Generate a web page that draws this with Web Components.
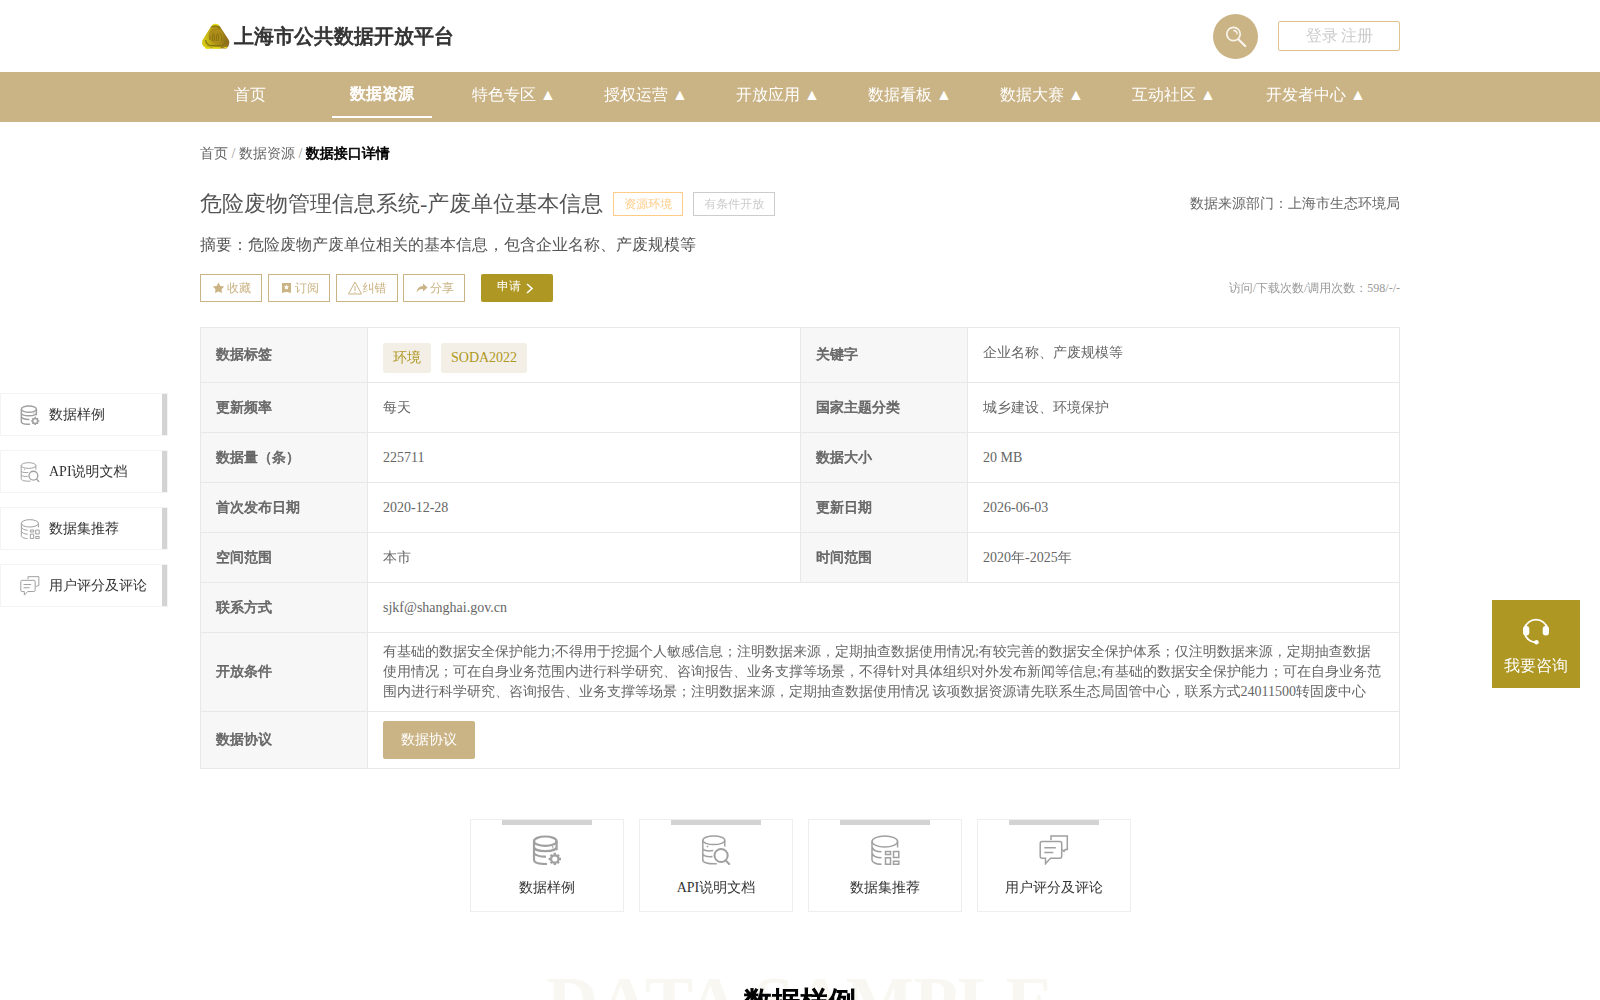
<!DOCTYPE html>
<html lang="zh-CN">
<head>
<meta charset="utf-8">
<title>上海市公共数据开放平台</title>
<style>
    html, body {
        margin: 0;
        height: 1000px;
        overflow: hidden;
    }

    body {
        background: #fff;
        color: #666;
        font-family: "Liberation Serif", "WenQuanYi Zen Hei", "Droid Sans Fallback", "Noto Sans CJK SC", serif;
        font-size: 14px;
        line-height: 20px;
        /* the CJK face has no bold cut, so bold text is thickened with a stroke */
        --bold-stroke: .045em;
    }
</style>
</head>
<body>
<open-data-page></open-data-page>

<script>
const define = (name, html) => {
    customElements.define(name, class extends HTMLElement {
        constructor() {
            super();
            this.attachShadow({ mode: 'open' }).innerHTML = html;
        }
    });
};

/**
 * Line icons, picked by the "name" attribute and sized by the "size" attribute
 */
const ICONS = {
    sample: `
        <g stroke-width="2.200"><ellipse cx="12.500" cy="6.200" rx="11.300" ry="4.700"/>
        <path d="M1.200 6.200V25c0 2.600 5 4 13 4M23.800 6.200v9M1.200 12c0 5.500 22.600 5.500 22.600 0M1.200 18.500q4 3.500 12 3.200"/>
        <circle cx="22" cy="24" r="3.700"/></g>
        <path stroke-width="2.400" d="M22 17.800v2M22 28v2M15.800 24h2M26.200 24h2M17.800 19.800l1.400 1.400M24.800 26.800l1.400 1.400M17.800 28.200l1.400-1.400M24.800 21.200l1.400-1.400"/>
        <path stroke-width="1" d="M20 11v2.500"/>`,
    api: `
        <g stroke-width="1.5"><ellipse cx="12" cy="5.300" rx="11" ry="4.300"/>
        <path d="M1 5.500V25c0 2.500 5 4.200 14 3.700M23 5.500v6M1 14c2 2 6.500 2.300 10.500 1.600M1 19.500c2 2.200 5 2.500 9.700 2"/>
        <path d="M5 11.500h1.500"/></g>
        <circle cx="19.300" cy="20.500" r="6.600" stroke-width="2"/><path stroke-width="2" d="M24 25.500l4 4.300"/>`,
    recommend: `
        <g stroke-width="1.5"><ellipse cx="14" cy="6.500" rx="12.800" ry="5.500"/>
        <path d="M1.200 6.500V25c0 2.300 4 4.300 9.500 4.300M26.800 6.500v6M1.200 12c1 3 4.500 4.800 9.500 4.800M1.200 18c1 3 4.500 4.800 9.500 4.800"/>
        <path d="M14.700 16.500h5v3h-5zM22.700 16.500h5.300v6h-5.300zM14.700 22.700h5v6.500h-5zM22.700 26.200h5.300v3h-5.300z"/></g>`,
    comment: `
        <g stroke-width="1.500" transform="translate(-.800)"><path d="M12 5V1h16.300v13.500h-2l-1.300 1.800-2-1.800"/>
        <path d="M3.200 6.500h17.500q2 0 2 2v12.800q0 2-2 2h-9.200L6.500 28.700v-5.400H3.200q-2 0-2-2V8.500q0-2 2-2z"/>
        <path d="M5.300 12.800h11.500M5.300 17.600h9"/></g>`
};

class DataIcon extends HTMLElement {
    constructor() {
        super();
        this.attachShadow({ mode: 'open' });
    }

    connectedCallback() {
        const size = this.getAttribute('size');
        this.shadowRoot.innerHTML = `
            <style>
                :host { display: block; width: ${size}px; height: ${size}px; }
                svg { display: block; }
            </style>
            <svg width="${size}" height="${size}" viewBox="-0.800 0 30 30" fill="none" stroke="#a0a0a0">${ICONS[this.getAttribute('name')]}</svg>
        `;
    }
}
customElements.define('data-icon', DataIcon);

define('site-header', `
    <style>
        :host { display: flex; align-items: center; width: 1200px; height: 72px; margin: 0 auto; }
        .logo { margin: 0 3px 0 1px; }
        h1 {
            flex: 1; margin: 0; font-size: 20px; line-height: 28px; color: #333;
            -webkit-text-stroke: var(--bold-stroke);
        }
        .search {
            width: 45px; height: 45px; margin: 1px 20px 0 0; border-radius: 50%;
            background: #cab384; display: grid; place-items: center;
        }
        .login {
            box-sizing: border-box; width: 122px; height: 30px; padding-left: 1px;
            border: 1px solid #e0c38c; border-radius: 2px;
            font-size: 16px; line-height: 27px; word-spacing: -1px; text-align: center; color: #ccc;
        }
    </style>
    <svg class="logo" width="30" height="27" viewBox="0 0 29 27" preserveAspectRatio="none">
        <defs>
            <linearGradient id="gold" x2="1"><stop stop-color="#d8ce16"/><stop offset=".45" stop-color="#b29a13"/><stop offset="1" stop-color="#8b671f"/></linearGradient>
        </defs>
        <path d="M10 3Q14-1 18 3l3.500 5.500 5 8Q29 21 24.500 25.500H5Q-.5 22 1.500 17z" fill="url(#gold)"/>
        <path d="M11 2.500q3-2 6 0M11 25h8M3.500 22.500L5 25h4M22 25l3-1" stroke="#e6e010" stroke-width="1.300" fill="none"/>
        <path d="M10 4.500q4.500-3 8.500 1M4.500 17q.5 4 4 5.500h12q3.500-2 4-5.500" stroke="#857512" stroke-width="1.200" fill="none"/>
        <ellipse cx="14.500" cy="12.500" rx="7" ry="7.500" fill="#ad8c19"/>
        <path d="M8.500 17v-4M11 18v-5l1-2 1 2v5M15 18v-5l1-2 1 2v5M20 18v-5l-2-3" stroke="#8a7410" fill="none"/>
    </svg>
    <h1>上海市公共数据开放平台</h1>
    <div class="search">
        <svg width="22" height="22" viewBox="0 0 22 22" fill="none" stroke="#f8f4ed" stroke-linecap="round">
            <circle cx="8.500" cy="8" r="6.700" stroke-width="1.700"/>
            <path d="M13.500 13.500l6.700 6.500" stroke-width="2.300"/>
            <path d="M8.800 4.500q3.200.3 3.400 3.200" stroke-width="1.400"/>
        </svg>
    </div>
    <div class="login">登录 注册</div>
`);

define('site-nav', `
    <style>
        :host { display: block; background: #cab384; }
        nav { display: flex; gap: 32px; width: 1200px; height: 50px; margin: 0 auto; }
        a {
            box-sizing: border-box; flex: none; width: 100px; height: 46px; line-height: 46px;
            font-size: 16px; text-align: center; white-space: nowrap; color: #fff;
        }
        a.active {
            border-bottom: 2px solid #fff; font-weight: bold; line-height: 44px;
            -webkit-text-stroke: var(--bold-stroke);
        }
        a:last-child { width: 120px; }
    </style>
    <nav>
        <a>首页</a><a class="active">数据资源</a><a>特色专区 ▲</a><a>授权运营 ▲</a><a>开放应用 ▲</a>
        <a>数据看板 ▲</a><a>数据大赛 ▲</a><a>互动社区 ▲</a><a>开发者中心 ▲</a>
    </nav>
`);

define('crumb-trail', `
    <style>
        :host { display: block; padding-top: 22px; color: #999; }
        a { color: #666; }
        b { color: #000; -webkit-text-stroke: var(--bold-stroke); }
    </style>
    <a>首页</a> / <a>数据资源</a> / <b>数据接口详情</b>
`);

define('tool-button', `
    <style>
        :host {
            box-sizing: border-box; display: flex; align-items: center; justify-content: center;
            width: 62px; height: 28px; padding-left: 1px; border: 1px solid #cab384;
            color: #cab384; font-size: 12px; line-height: 26px;
        }
    </style>
    <slot></slot>
`);

define('resource-head', `
    <style>
        :host { display: block; }
        .row { display: flex; align-items: center; }
        .title { height: 24px; margin-top: 28px; gap: 10px; }
        h2 { margin: 0; font-size: 22px; line-height: 30px; font-weight: normal; color: #555; }
        .tag { box-sizing: border-box; height: 24px; padding: 0 10px; border: 1px solid #ccc; font-size: 12px; line-height: 22px; color: #ccc; }
        .tag.theme { border-color: #fc8; color: #fc8; }
        .right { margin-left: auto; }
        p { margin: 17px 0; font-size: 16px; line-height: 24px; color: #555; }
        .tools { gap: 6px; }
        .tools svg { flex: none; overflow: visible; }
        .apply {
            box-sizing: border-box; display: flex; gap: 5px; width: 72px; height: 28px; margin-left: 10px; padding-left: 16px;
            border-radius: 2px; background: #ae9722; color: #fff; font-size: 12px; line-height: 24px;
        }
        .apply svg { margin-top: 9px; }
        .count { font-size: 12px; color: #999; }
    </style>
    <div class="row title">
        <h2>危险废物管理信息系统-产废单位基本信息</h2>
        <span class="tag theme">资源环境</span>
        <span class="tag">有条件开放</span>
        <span class="right">数据来源部门：上海市生态环境局</span>
    </div>
    <p>摘要：危险废物产废单位相关的基本信息，包含企业名称、产废规模等</p>
    <div class="row tools">
        <tool-button>
            <svg width="15" height="12" viewBox="0 0 15 12" fill="#cab384"><path d="M6.500 0.500l1.800 3.400 3.900.7-2.700 2.700.5 3.800-3.500-1.600L3 11.100l.5-3.800L.8 4.600l3.900-.7z"/></svg>收藏
        </tool-button>
        <tool-button>
            <svg width="15" height="12" viewBox="-1 0 15 12" fill="#cab384"><path fill-rule="evenodd" d="M1 1h9v10L5.500 9.700 1 11zM5.500 2.500l-.8 1.700-1.800.2 1.300 1.300-.3 1.800 1.600-.8 1.600.8-.3-1.800 1.300-1.300-1.800-.2z"/></svg>订阅
        </tool-button>
        <tool-button>
            <svg width="14" height="14" viewBox="1.500 0 14 14" fill="none" stroke="#cab384"><path d="M7.500 1L14 13H1zM7.500 5v5M7.500 11v1"/></svg>纠错
        </tool-button>
        <tool-button style="margin-left: -1px">
            <svg width="15" height="12" viewBox="-.5 0 15 12" fill="#cab384"><path d="M7.500 1.500L12 5.500l-4.500 4V7Q3.500 6.500 1 10.500 2 4 7.500 4z"/></svg>分享
        </tool-button>
        <span class="apply">申请<svg width="8" height="11" viewBox="0 0 8 11" fill="none" stroke="#fff" stroke-width="1.600"><path d="M1 1l5 4.500L1 10"/></svg></span>
        <span class="right count">访问/下载次数/调用次数：598/-/-</span>
    </div>
`);

define('info-table', `
    <style>
        :host {
            display: grid; grid-template-columns: 166px 432px 166px 431px;
            grid-template-rows: 54px repeat(5, 49px) 78px 56px;
            gap: 1px; padding: 1px; margin-top: 25px; background: #e8e8e8;
        }
        div { display: flex; align-items: center; padding: 0 15px; background: #fff; }
        .th { background: #f7f7f7; font-weight: bold; -webkit-text-stroke: var(--bold-stroke); }
        .wide { grid-column: span 3; }
        .tags { gap: 10px; padding-top: 6px; }
        .tags span { padding: 0 10px; border-radius: 3px; background: #f4efe6; color: #ae9722; line-height: 30px; }
        .keywords { padding-bottom: 4px; }
        .deal { padding: 0 18px; border-radius: 2px; background: #cab384; color: #fff; line-height: 38px; }
    </style>
    <div class="th">数据标签</div><div class="tags"><span>环境</span><span>SODA2022</span></div>
    <div class="th">关键字</div><div class="keywords">企业名称、产废规模等</div>
    <div class="th">更新频率</div><div>每天</div>
    <div class="th">国家主题分类</div><div>城乡建设、环境保护</div>
    <div class="th">数据量（条）</div><div>225711</div>
    <div class="th">数据大小</div><div>20 MB</div>
    <div class="th">首次发布日期</div><div>2020-12-28</div>
    <div class="th">更新日期</div><div>2026-06-03</div>
    <div class="th">空间范围</div><div>本市</div>
    <div class="th">时间范围</div><div>2020年-2025年</div>
    <div class="th">联系方式</div><div class="wide">sjkf@shanghai.gov.cn</div>
    <div class="th">开放条件</div><div class="wide">有基础的数据安全保护能力;不得用于挖掘个人敏感信息；注明数据来源，定期抽查数据使用情况;有较完善的数据安全保护体系；仅注明数据来源，定期抽查数据使用情况；可在自身业务范围内进行科学研究、咨询报告、业务支撑等场景，不得针对具体组织对外发布新闻等信息;有基础的数据安全保护能力；可在自身业务范围内进行科学研究、咨询报告、业务支撑等场景；注明数据来源，定期抽查数据使用情况 该项数据资源请先联系生态局固管中心，联系方式24011500转固废中心</div>
    <div class="th">数据协议</div><div class="wide"><span class="deal">数据协议</span></div>
`);

define('jump-card', `
    <style>
        :host {
            box-sizing: border-box; display: flex; flex-direction: column; align-items: center;
            width: 154px; height: 93px; border: 1px solid #eee; background: #fff; color: #333;
        }
        :host::before { content: ""; width: 90px; height: 5px; margin-bottom: 10px; background: #d3d3d3; }
        .label { margin-top: 13px; }
    </style>
    <slot name="icon"></slot>
    <span class="label"><slot></slot></span>
`);

define('side-link', `
    <style>
        :host {
            box-sizing: border-box; display: flex; align-items: center; width: 168px; height: 43px;
            padding-left: 19px; border: 1px solid #f4f4f4; background: #fff; color: #333;
        }
        .label { flex: 1; margin-left: 9px; padding-top: 1px; }
        :host::after { content: ""; width: 5px; height: 41px; background: #d3d3d3; }
    </style>
    <slot name="icon"></slot>
    <span class="label"><slot></slot></span>
`);

define('consult-button', `
    <style>
        :host {
            display: flex; flex-direction: column; align-items: center; width: 88px; height: 88px;
            background: #ae9722; color: #fff; font-size: 16px; line-height: 24px;
        }
        svg { margin: 17px 0 8px; }
    </style>
    <svg width="28" height="29" viewBox="0 0 28 29" fill="none" stroke="#fff" stroke-width="1.800">
        <path d="M2.500 11.500a11.900 11.900 0 0 1 23 0M2.500 16q2 8.500 11.500 9.500"/>
        <g fill="#fff" stroke="none"><rect x="1" y="9" width="6.300" height="9.500" rx="3"/><rect x="20.700" y="9" width="6.300" height="9.500" rx="3"/><circle cx="14.500" cy="25.300" r="2.200"/></g>
    </svg>
    我要咨询
`);

define('section-title', `
    <style>
        :host { display: grid; justify-items: center; margin-top: 50px; line-height: 80px; }
        .ghost, h3 { grid-area: 1 / 1; margin: 0; font-weight: bold; }
        .ghost { font-size: 72px; color: #f8f7f1; }
        h3 { font-size: 28px; color: #000; -webkit-text-stroke: var(--bold-stroke); }
    </style>
    <span class="ghost">DATA SAMPLE</span>
    <h3>数据样例</h3>
`);

const SECTIONS = [
    ['sample', '数据样例'],
    ['api', 'API说明文档'],
    ['recommend', '数据集推荐'],
    ['comment', '用户评分及评论']
];
const sectionLinks = (tag, size) => SECTIONS.map(([icon, label]) =>
    `<${tag}><data-icon slot="icon" name="${icon}" size="${size}"></data-icon>${label}</${tag}>`
).join('');

define('open-data-page', `
    <style>
        :host { display: block; height: 1000px; overflow: hidden; }
        main { width: 1200px; margin: 0 auto; }
        .cards { display: flex; justify-content: center; gap: 15px; margin: 50px 0 0 1px; }
        /* both float over the page */
        aside { position: fixed; left: 0; top: 393px; display: grid; gap: 14px; }
        consult-button { position: fixed; right: 20px; top: 600px; }
    </style>
    <site-header></site-header>
    <site-nav></site-nav>
    <main>
        <crumb-trail></crumb-trail>
        <resource-head></resource-head>
        <info-table></info-table>
        <div class="cards">${sectionLinks('jump-card', 30)}</div>
        <section-title></section-title>
    </main>
    <aside>${sectionLinks('side-link', 20)}</aside>
    <consult-button></consult-button>
`);
</script>
</body>
</html>
